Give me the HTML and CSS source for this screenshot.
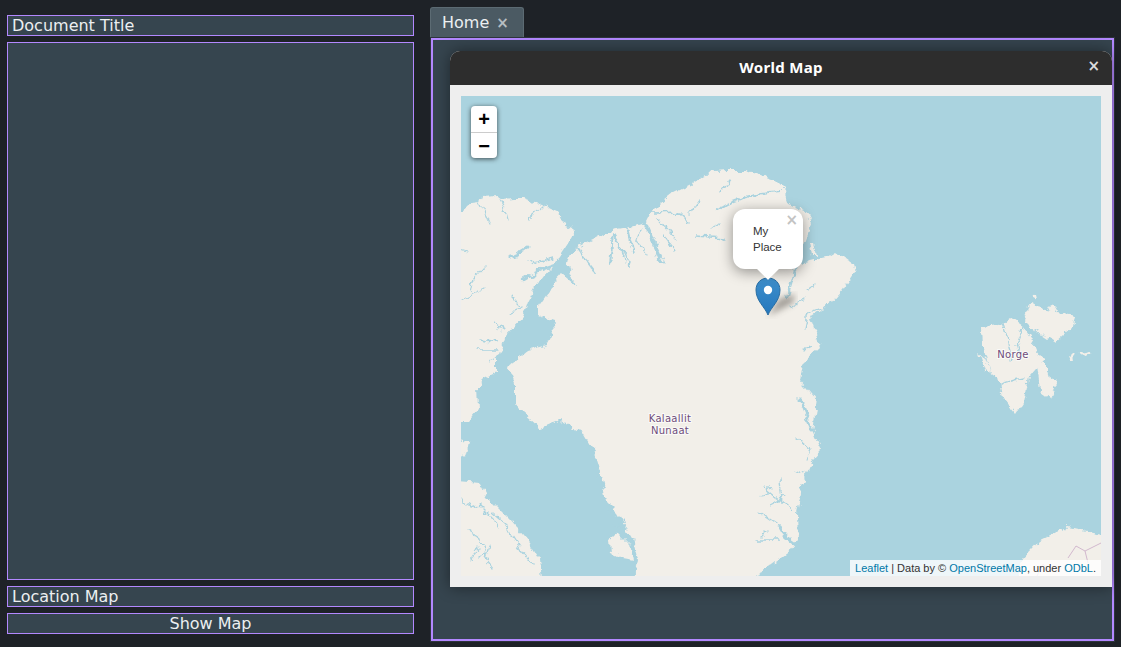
FILE: index.html
```html
<!DOCTYPE html>
<html lang="en">
<head>
  <meta charset="UTF-8" />
  <title>World Map</title>
  <link rel="stylesheet" href="styles.css">
</head>
<body>
  <div class="side">
    <div class="field">Document Title</div>
    <div class="editor"></div>
    <div class="field">Location Map</div>
    <div class="field center">Show Map</div>
  </div>

  <div class="main">
    <div class="tabs">
      <div class="tab">Home <span class="tab-close">×</span></div>
    </div>
    <div class="panel">
      <div class="window">
        <div class="window-head">
          <span class="window-title">World Map</span>
          <span class="window-close">×</span>
        </div>
        <div class="window-body">
          <div class="map">
            <svg class="tiles" viewBox="461 96 640 480" width="640" height="480">
              <defs>
                <filter id="coast" filterUnits="userSpaceOnUse" x="440" y="80" width="700" height="520">
                  <feTurbulence type="fractalNoise" baseFrequency="0.11" numOctaves="4" seed="7"/>
                  <feDisplacementMap in="SourceGraphic" scale="9" xChannelSelector="R" yChannelSelector="G"/>
                  <feGaussianBlur stdDeviation="0.35"/>
                </filter>
              </defs>
              <rect x="461" y="96" width="640" height="480" fill="#aad3df"/>
              <g filter="url(#coast)">
                <g fill="#f2efe9">
                  <!-- west land -->
                  <polygon points="445,212 462,212 473,203 480,202 482,197 498,196 502,199 515,198 523,198 542,205 550,209 557,212 563,223 572,227 573,235 567,245 555,263 545,275 536,287 528,302 523,317 505,337 497,360 497,373 483,380 477,387 478,410 467,423 445,423"/>
                  <!-- main land -->
                  <polygon points="577,247 592,240 607,232 627,228 647,222 653,210 660,203 673,193 693,183 707,173 727,171 747,171 773,180 785,192 787,203 806,212 812,223 806,240 797,263 805,262 827,257 835,252 853,265 855,272 843,290 832,303 810,317 820,347 803,363 800,380 817,400 813,430 822,450 813,460 803,483 797,513 798,540 790,550 760,572 750,590 633,590 638,560 633,540 617,513 607,503 603,483 593,450 583,433 560,420 540,428 523,413 515,403 515,383 508,367 528,350 547,345 555,330 553,320 538,315 538,307 557,280 562,274 575,285 568,264 570,256"/>
                  <polygon points="445,480 480,483 487,497 510,520 530,543 540,560 543,590 445,590"/>
                  <polygon points="445,438 468,443 465,455 445,461"/>
                  <polygon points="609,540 618,533 630,545 633,560 622,558 610,552"/>
                  <polygon points="1017,590 1022,560 1040,540 1067,527 1082,530 1115,538 1115,590"/>
                  <!-- svalbard -->
                  <polygon points="982,327 1003,323 1010,318 1023,327 1030,338 1035,350 1043,360 1028,377 1023,403 1015,415 1003,400 998,378 990,372 983,347"/>
                  <polygon points="1023,320 1028,308 1032,303 1047,312 1052,303 1057,312 1075,315 1073,327 1055,343 1040,333 1030,327"/>
                  <polygon points="1037,363 1047,363 1047,372 1058,380 1050,398 1040,390"/>
                  <polygon points="980,354 985,358 990,372 986,372"/>
                  <polygon points="1071,355 1074,352 1075,360 1072,359"/>
                  <polygon points="1080,352 1090,350 1092,353 1082,355"/>
                  <polygon points="810,242 813,242 817,256 813,256"/>
                  <polygon points="1030,297 1035,295 1036,299 1031,300"/>
                </g>
                <g fill="none" stroke="#aad3df" stroke-linecap="round" stroke-linejoin="round" stroke-width="1.3">
                  <!-- west land fjords -->
                  <path d="M480 202Q486 212 490 223M500 200Q506 210 508 220M543 207Q535 214 528 220M461 248L468 250"/>
                  <path d="M507 258Q518 256 528 248" stroke-width="3"/>
                  <path d="M555 265Q538 270 523 280" stroke-width="2.4"/>
                  <path d="M528 258L535 263 553 258M484 268L472 282 470 292M461 300L485 288M512 297L522 307 510 313M493 323L505 330M480 340L497 343M477 350L497 350M500 358L490 362"/>
                  <!-- north coast fjords -->
                  <path d="M577 248Q586 260 595 272M613 235L610 265M613 235L632 265M627 228L633 252" stroke-width="2"/>
                  <path d="M645 223Q655 245 662 262" stroke-width="4"/>
                  <path d="M653 213L680 212 690 222M657 217L677 240M640 213L660 213M663 235L675 250M700 200L690 214M730 180L722 192" stroke-width="1.5"/>
                  <path d="M642 228L637 240 648 256M620 245L625 262"/>
                  <path d="M717 210Q725 203 740 198T780 191" stroke-width="2.2"/>
                  <path d="M695 236L725 238M720 222L712 228"/>
                  <!-- east coast fjords -->
                  <path d="M797 263Q792 282 787 297" stroke-width="2.4"/>
                  <path d="M830 305L808 313 805 327M803 300L790 307M812 345L803 350M815 285L808 290"/>
                  <path d="M800 400L812 430" stroke-width="3"/>
                  <path d="M795 438L810 450 807 460M793 470L807 475"/>
                  <path d="M765 487L793 510M780 478L782 503M770 492L760 498M785 497L770 505"/>
                  <path d="M758 512L780 527" stroke-width="1.2"/>
                  <path d="M780 527Q785 537 795 543" stroke-width="3.5"/>
                  <path d="M755 540L780 540M768 530L762 536"/>
                  <!-- south west bay -->
                  <path d="M615 514L607 510M624 520L618 528 614 522M628 528L620 530M634 540L624 536M600 470L596 478M606 490L602 485"/>
                  <path d="M462 500L472 506 480 504M480 505L492 517 497 527M492 512L506 524 512 536M468 530L480 538 486 552 478 560M512 535L522 551 534 565M470 560L478 548M490 545L486 559 494 569"/>
                  <!-- svalbard fjords -->
                  <path d="M1003 323L1011 351 1009 359M1023 327L1017 343 1021 357M1000 384L1014 380 1024 378M1030 327L1042 333"/>
                </g>
              </g>
              <g fill="none" stroke="#c9a9c6" stroke-width="0.8">
                <path d="M1068 558L1076 546 1085 551 1088 563M1085 551L1101 543M1037 576L1043 564 1051 572"/>
              </g>
              <g class="place">
                <text x="670" y="422">Kalaallit</text>
                <text x="670" y="434">Nunaat</text>
                <text x="1013" y="358">Norge</text>
              </g>
            </svg>

            <div class="zoom">
              <div class="zoom-btn">+</div>
              <div class="zoom-btn">−</div>
            </div>

            <svg class="marker" viewBox="0 0 60 42" width="60" height="42">
              <defs>
                <linearGradient id="pin" x1="0" y1="0" x2="0" y2="1">
                  <stop offset="0" stop-color="#3f8fcb"/>
                  <stop offset="1" stop-color="#2477bd"/>
                </linearGradient>
                <filter id="soft"><feGaussianBlur stdDeviation="3"/></filter>
              </defs>
              <path d="M13 39L24 22 40 17 38 26z" fill="#55504a" opacity="0.5" filter="url(#soft)"/>
              <path d="M13 38C10 30 1 24 1 13 1 6 6 1 13 1s12 5 12 12c0 11-9 17-12 25z" fill="url(#pin)" stroke="#2a6ea3"/>
              <circle cx="13" cy="13" r="4.2" fill="#fff"/>
            </svg>

            <div class="popup">
              <span class="popup-close">×</span>
              <div class="popup-text">My<br>Place</div>
              <div class="popup-tip"></div>
            </div>

            <div class="attrib"><a>Leaflet</a> | Data by © <a>OpenStreetMap</a>, under <a>ODbL</a>.</div>
          </div>
        </div>
      </div>
    </div>
  </div>
</body>
</html>
```

FILE: styles.css
```css
* {
  box-sizing: border-box;
  margin: 0;
  padding: 0;
}

html, body {
  height: 100%;
  overflow: hidden;
}

body {
  background: #1e2227;
  color: #eceff1;
  display: flex;
  font-family: 'DejaVu Sans', sans-serif;
  font-size: 16px;
}

.side {
  display: flex;
  flex-direction: column;
  gap: 6px;
  height: 619px;
  margin: 15px 0 0 7px;
  width: 407px;
}

.field {
  background: #36454f;
  border: 1px solid #b388ff;
  flex: none;
  height: 21px;
  line-height: 19px;
  padding-left: 4px;
}

.center {
  padding-left: 0;
  text-align: center;
}

.editor {
  background: #36454f;
  border: 1px solid #b388ff;
  flex: 1;
}

.main {
  display: flex;
  flex-direction: column;
  height: 634px;
  margin: 7px 0 0 16px;
  width: 684px;
}

.tabs {
  display: flex;
  flex: none;
  height: 31px;
}

.tab {
  background: #4b5a63;
  border: 1px solid #5c6b73;
  border-bottom: none;
  border-radius: 3px 3px 0 0;
  height: 31px;
  line-height: 29px;
  padding-left: 11px;
  white-space: nowrap;
  width: 94px;
}

.tab-close {
  color: #b6bdc2;
  font-size: 15px;
  font-weight: bold;
  line-height: 1;
  margin-left: 2px;
}

.panel {
  background: #36454f;
  border: 2px solid #b388ff;
  box-shadow: 0 0 0 1px #2e353c;
  flex: 1;
  margin-left: 1px;
  padding: 11px 0 0 17px;
}

.window {
  background: #eeeeee;
  border-radius: 10px 10px 0 0;
  box-shadow: 0 0 16px rgba(0,0,0,0.45);
  height: 536px;
  width: 662px;
}

.window-head {
  align-items: center;
  background: #2d2d2d;
  border-radius: 10px 10px 0 0;
  color: #fff;
  display: flex;
  height: 34px;
  justify-content: center;
  padding-bottom: 2px;
  position: relative;
}

.window-title {
  font-family: 'Noto Sans', sans-serif;
  font-size: 15px;
  font-weight: bold;
  letter-spacing: 0.3px;
}

.window-close {
  color: #dcdcdc;
  font-size: 15px;
  font-weight: bold;
  line-height: 1;
  position: absolute;
  right: 12px;
  top: 8px;
}

.window-body {
  padding: 11px;
}

.map {
  font-family: 'Liberation Sans', sans-serif;
  height: 480px;
  overflow: hidden;
  position: relative;
  width: 640px;
}

.tiles {
  display: block;
}

.place text {
  fill: #6e4c7a;
  font-family: 'DejaVu Sans', sans-serif;
  font-size: 10px;
  letter-spacing: 0.3px;
  paint-order: stroke;
  stroke: #fff;
  stroke-opacity: 0.7;
  stroke-width: 2px;
  text-anchor: middle;
}

.zoom {
  background: #fff;
  border-radius: 4px;
  box-shadow: 0 1px 5px rgba(0,0,0,0.65);
  left: 10px;
  position: absolute;
  top: 10px;
  width: 26px;
}

.zoom-btn {
  color: #000;
  font-size: 20px;
  font-weight: bold;
  height: 26px;
  line-height: 26px;
  text-align: center;
}

.zoom-btn + .zoom-btn {
  border-top: 1px solid #ccc;
}

.marker {
  left: 294px;
  position: absolute;
  top: 181px;
}

.popup {
  background: #fff;
  border-radius: 12px;
  box-shadow: 0 3px 14px rgba(0,0,0,0.4);
  color: #333;
  font-size: 11.5px;
  height: 60px;
  left: 272px;
  line-height: 16px;
  position: absolute;
  top: 113px;
  width: 70px;
}

.popup-text {
  padding: 14px 0 0 20px;
}

.popup-close {
  color: #c3c3c3;
  font-family: 'DejaVu Sans', sans-serif;
  font-size: 15px;
  font-weight: bold;
  line-height: 1;
  position: absolute;
  right: 5px;
  top: 4px;
}

.popup-tip {
  background: #fff;
  clip-path: polygon(100% 0, 100% 100%, 0 100%);
  height: 16px;
  left: 27px;
  position: absolute;
  top: 52px;
  transform: rotate(45deg);
  width: 16px;
}

.attrib {
  background: rgba(255,255,255,0.8);
  bottom: 0;
  color: #333;
  font-size: 11px;
  height: 16px;
  line-height: 16px;
  padding: 0 5px;
  position: absolute;
  right: 0;
}

.attrib a {
  color: #0078a8;
}
```
